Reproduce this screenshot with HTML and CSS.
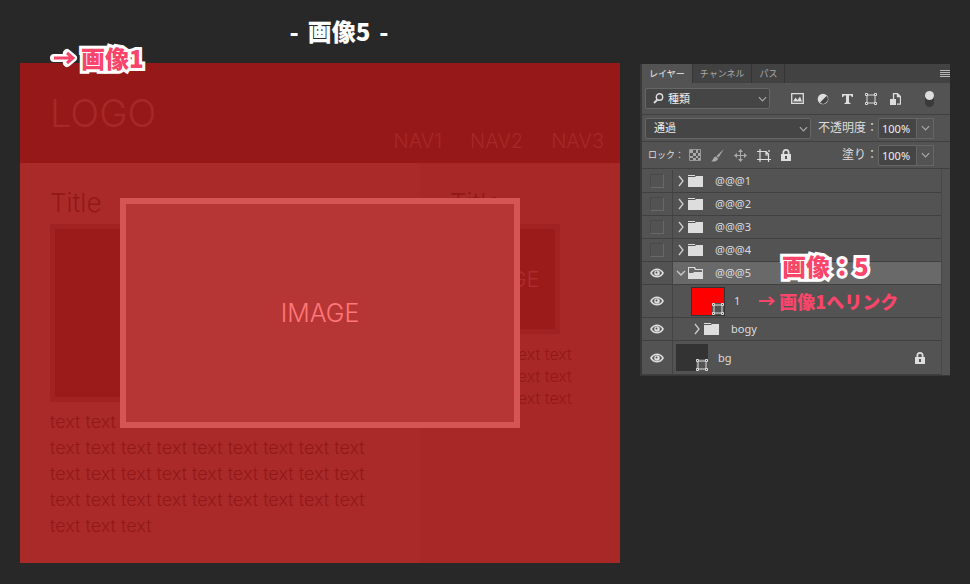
FILE: index.html
```html
<!DOCTYPE html>
<html lang="ja">
<head>
<meta charset="utf-8">
<title>画像5</title>
<link rel="stylesheet" href="styles.css">
</head>
<body>
<svg class="defs" width="0" height="0" aria-hidden="true">
  <symbol id="folder" viewBox="0 0 15 12"><path d="M0 0h7v1H0zM0 2h7l1-1h7v11H0z"/></symbol>
  <symbol id="folder-open" viewBox="0 0 15 12"><path fill-rule="evenodd" d="M0 0h7l1 2h7v10H0zM1 1v5h4l1-1h8V3H7L6 1z"/></symbol>
  <symbol id="eye" viewBox="0 0 14 10"><path fill-rule="evenodd" d="M0 5C3-1 11-1 14 5 11 11 3 11 0 5zM2 5c2 4 8 4 10 0C10 1 4 1 2 5z"/><circle cx="7" cy="5" r="2.8"/><circle cx="6.5" cy="4.5" r="1" fill="#535353"/></symbol>
  <symbol id="right" viewBox="0 0 6 12"><path d="M1 1l4 5-4 5" fill="none" stroke="currentColor" stroke-width="1.3"/></symbol>
  <symbol id="down" viewBox="0 0 10 6"><path d="M1 1l4 4 4-4" fill="none" stroke="currentColor" stroke-width="1.3"/></symbol>
  <symbol id="lock" viewBox="0 0 10 12"><path fill-rule="evenodd" d="M0 5h1.5V3.5a3.5 3.5 0 0 1 7 0V5H10v7H0zM3.2 5h3.6V3.5a1.8 1.8 0 0 0-3.6 0zM4 7v3h2V7z"/></symbol>
  <symbol id="shape" viewBox="0 0 12 12"><path d="M2 2h8M2 10h8M2 2v8M10 2v8" fill="none" stroke="currentColor"/><g fill="#444" stroke="currentColor"><path d="M.5.5h2v2h-2zM9.500.5h2v2h-2zM.5 9.500h2v2h-2zM9.500 9.500h2v2h-2z"/></g></symbol>
</svg>
<main class="page">
  <section class="preview">
    <h1 class="heading"><span>-</span><span>画像5</span><span>-</span></h1>
    <div class="mock">
      <a class="callout callout-link" href="#image1"><svg class="callout-arrow" viewBox="0 0 26 18" aria-hidden="true"><path class="outline" d="M3 9h18M16 4l6 5-6 5"/><path class="ink" d="M3 9h18M16 4l6 5-6 5"/></svg><span>画像1</span></a>
      <header class="mock-header">
        <div class="logo">LOGO</div>
        <nav class="nav"><a href="#nav1">NAV1</a><a href="#nav2">NAV2</a><a href="#nav3">NAV3</a></nav>
      </header>
      <div class="mock-body">
        <article class="content">
          <h2 class="title">Title</h2>
          <div class="picture"></div>
          <p>text text text text text text text text text<br>text text text text text text text text text<br>text text text text text text text text text<br>text text text text text text text text text<br>text text text</p>
        </article>
        <aside class="side">
          <h2 class="title">Title</h2>
          <div class="picture">IMAGE</div>
          <p>text text text text<br>text text text text<br>text text text text</p>
        </aside>
      </div>
      <div class="modal">IMAGE</div>
    </div>
  </section>
  <section class="panel">
    <div class="tabs">
      <button class="tab active">レイヤー</button><button class="tab">チャンネル</button><button class="tab">パス</button>
      <button class="menu" aria-label="メニュー"><svg width="10" height="8" viewBox="0 0 10 8"><path d="M0 .5h10M0 2.500h10M0 4.500h10M0 6.500h10" stroke="#bbb"/></svg></button>
    </div>
    <div class="bar filter">
      <div class="select kind">
        <svg class="search" width="11" height="11" viewBox="0 0 11 11"><circle cx="6.500" cy="4" r="3.200" fill="none" stroke="#ddd" stroke-width="1.400"/><path d="M4.500 6.500L1 10" stroke="#ddd" stroke-width="1.800"/></svg>
        <select aria-label="種類"><option>種類</option></select>
        <svg class="chev" width="9" height="6"><use href="#down"/></svg>
      </div>
      <div class="filters">
        <button aria-label="ピクセル"><svg width="13" height="11" viewBox="0 0 13 11"><path d="M.7.7h11.600v9.600H.7z" fill="none" stroke="#ddd" stroke-width="1.300"/><path d="M2 8.500l2.500-4 2 2.500L9 3.500l2 5z"/></svg></button>
        <button aria-label="調整"><svg width="12" height="12" viewBox="0 0 12 12"><circle cx="6" cy="6" r="5.300"/><path d="M3 9.500L9.500 3a4.600 4.600 0 0 1-6.500 6.500z" fill="#444"/></svg></button>
        <button aria-label="テキスト"><svg width="11" height="10" viewBox="0 0 11 10"><path d="M0 0h11v3H9.800L9 1.500H7v7l1.500.500v1h-6V9L4 8.500v-7H2L1.200 3H0z"/></svg></button>
        <button aria-label="シェイプ"><svg width="12" height="12"><use href="#shape"/></svg></button>
        <button aria-label="スマート"><svg width="11" height="12" viewBox="0 0 11 12"><path d="M3.500 6V.7h4l3 3v7.500H7M7.500.7v3h3" fill="none" stroke="#ddd" stroke-width="1.300"/><path d="M0 6h6v6H0z"/></svg></button>
      </div>
      <button class="toggle" aria-label="フィルター"></button>
    </div>
    <div class="bar">
      <div class="select blend">
        <select aria-label="描画モード"><option>通過</option></select>
        <svg class="chev" width="9" height="6"><use href="#down"/></svg>
      </div>
      <label for="opacity">不透明度：</label>
      <div class="number"><input id="opacity" value="100%"><button aria-label="不透明度を選択"><svg width="9" height="6"><use href="#down"/></svg></button></div>
    </div>
    <div class="bar locks">
      <span class="lock-label">ロック：</span>
      <div class="lock-tools">
        <button aria-label="透明"><svg width="12" height="12" viewBox="0 0 12 12"><path d="M.5.5h11v11H.5z" fill="none" stroke="#999"/><path fill="#aaa" d="M1 1h3v3H1zM7 1h2v3H7zM4 4h3v3H4zM9 4h2v3H9zM1 7h3v2H1zM7 7h2v2H7zM4 9h3v2H4zM9 9h2v2H9z"/></svg></button>
        <button aria-label="ブラシ"><svg width="13" height="13" viewBox="0 0 13 13"><path fill="#aaa" d="M13 0L7.500 8.500 5.500 7zM5 7.500l2 1.700C7 12 4 13 0 12.500 2.500 11 2 8 5 7.500z"/></svg></button>
        <button aria-label="位置"><svg width="13" height="13" viewBox="0 0 13 13"><path fill="#aaa" d="M6 2h1v4h4v1H7v4H6V7H2V6h4zM6.500 0L9 3H4zM6.500 13L4 10h5zM0 6.500L3 4v5zM13 6.500L10 9V4z"/></svg></button>
        <button aria-label="アートボード"><svg width="14" height="13" viewBox="0 0 14 13"><path d="M3 0v13M0 2.500h9l3 3M11.500 5v8M0 10.500h14M9 2v4h3M12 1v2" fill="none" stroke="#ddd" stroke-width="1.200"/></svg></button>
        <button aria-label="すべて"><svg width="10" height="12"><use href="#lock"/></svg></button>
      </div>
      <label for="fill">塗り：</label>
      <div class="number"><input id="fill" value="100%"><button aria-label="塗りを選択"><svg width="9" height="6"><use href="#down"/></svg></button></div>
    </div>
    <ul class="layers">
      <li class="layer"><button class="eye off" aria-label="表示"></button><svg class="caret" width="6" height="12"><use href="#right"/></svg><svg class="folder" width="15" height="12"><use href="#folder"/></svg><span>@@@1</span></li>
      <li class="layer"><button class="eye off" aria-label="表示"></button><svg class="caret" width="6" height="12"><use href="#right"/></svg><svg class="folder" width="15" height="12"><use href="#folder"/></svg><span>@@@2</span></li>
      <li class="layer"><button class="eye off" aria-label="表示"></button><svg class="caret" width="6" height="12"><use href="#right"/></svg><svg class="folder" width="15" height="12"><use href="#folder"/></svg><span>@@@3</span></li>
      <li class="layer"><button class="eye off" aria-label="表示"></button><svg class="caret" width="6" height="12"><use href="#right"/></svg><svg class="folder" width="15" height="12"><use href="#folder"/></svg><span>@@@4</span></li>
      <li class="layer selected"><button class="eye" aria-label="非表示"><svg width="14" height="10"><use href="#eye"/></svg></button><svg class="caret" width="10" height="6"><use href="#down"/></svg><svg class="folder" width="15" height="12"><use href="#folder-open"/></svg><span>@@@5</span><strong class="callout callout-layer">画像：5</strong></li>
      <li class="layer tall child"><button class="eye" aria-label="非表示"><svg width="14" height="10"><use href="#eye"/></svg></button><div class="thumb red"><svg width="12" height="12"><use href="#shape"/></svg></div><span>1</span><a class="link" href="#image1"><svg class="link-arrow" viewBox="0 0 26 18" aria-hidden="true"><path class="ink" d="M1 9h22M16 3l7 6-7 6"/></svg>画像1へリンク</a></li>
      <li class="layer nested"><button class="eye" aria-label="非表示"><svg width="14" height="10"><use href="#eye"/></svg></button><svg class="caret" width="6" height="12"><use href="#right"/></svg><svg class="folder" width="15" height="12"><use href="#folder"/></svg><span>bogy</span></li>
      <li class="layer tall"><button class="eye" aria-label="非表示"><svg width="14" height="10"><use href="#eye"/></svg></button><div class="thumb"><svg width="12" height="12"><use href="#shape"/></svg></div><span>bg</span><svg class="locked" width="10" height="12"><use href="#lock"/></svg></li>
    </ul>
  </section>
</main>
</body>
</html>
```
FILE: styles.css
```css
* { box-sizing: border-box; }
body { margin: 0; min-height: 100vh; background: #282828; color: #ddd; font-family: "Noto Sans", "Noto Sans CJK JP", sans-serif; }
button { padding: 0; border: 0; background: none; color: inherit; font: inherit; display: flex; align-items: center; justify-content: center; }
a { color: inherit; text-decoration: none; }
svg { display: block; flex: none; fill: currentColor; }
.defs { position: absolute; }
.page { display: grid; grid-template-columns: 600fr 310fr; gap: 20px; padding: 0 20px 20px; align-items: start; }

.heading { display: flex; justify-content: center; gap: 9px; height: 63px; margin: 0; padding: 15px 0 0 38px; color: #fff; font: 900 24px/32px "Noto Sans CJK JP", sans-serif; }
.mock { position: relative; min-height: 500px; display: flex; flex-direction: column; background: #aa2a2a; font-family: Inter, sans-serif; font-weight: 300; }
.mock-header { height: 100px; display: flex; justify-content: space-between; padding: 0 16px 0 30px; background: #971818; color: #a62828; }
.logo { padding-top: 22px; font-size: 38px; line-height: 56px; }
.nav { display: flex; align-items: flex-end; gap: 28px; padding-bottom: 10px; font-size: 20px; line-height: 24px; }
.mock-body { flex: 1; display: grid; grid-template-columns: minmax(0, 400fr) minmax(0, 200fr); color: #921818; }
.content, .side { padding: 24px 30px 0; }
.side { background: #a82828; padding-right: 60px; }
.title { margin: 0; font-size: 26px; line-height: 32px; font-weight: 300; }
.picture { display: flex; align-items: center; justify-content: center; border: 5px solid #a12222; background: #9b1b1b; color: #ad2d2d; font-size: 22px; }
.content .picture { height: 178px; margin-top: 5px; }
.side .picture { height: 110px; margin-top: 5px; }
.content p { margin: 7px 0 0; font-size: 18px; line-height: 26px; white-space: nowrap; }
.side p { margin: 9px 0 0; font-size: 16px; line-height: 22px; white-space: nowrap; }
.modal { position: absolute; inset: 135px 100px; display: flex; align-items: center; justify-content: center; border: 6px solid #d55555; background: #b63636; color: #f77; font-size: 25px; }

.callout { position: absolute; display: flex; align-items: center; color: #fa456b; font: 900 24px/32px "Noto Sans CJK JP", sans-serif; white-space: nowrap; paint-order: stroke fill; -webkit-text-stroke: 6px #fff; }
.callout-link { left: 31px; top: -21px; gap: 4px; }
.callout-arrow { width: 26px; height: 18px; overflow: visible; }
.callout-arrow path, .link-arrow path { fill: none; }
.callout-arrow .outline { stroke: #fff; stroke-width: 8px; stroke-linecap: round; stroke-linejoin: round; }
.ink { stroke: #fa456b; stroke-width: 3px; }
.callout-layer { left: 140px; top: -12px; }

.panel { margin-top: 64px; border: 1px solid #383838; border-width: 0 0 1px 2px; background: #535353; font-size: 11px; line-height: 16px; }
.tabs { display: flex; height: 19px; background: #424242; }
.tab { padding: 0 7px; border-right: 1px solid #353535; color: #aaa; font-size: 9px; }
.tab.active { background: #535353; color: #eee; }
.menu { margin-left: auto; width: 11px; }
.bar { display: flex; align-items: center; height: 27px; padding: 0 16px 0 3px; border-bottom: 1px solid #404040; }
.bar.filter { height: 32px; }
.bar label { margin-left: auto; font-size: 12px; white-space: nowrap; }
.select { position: relative; height: 21px; }
.kind { width: 125px; }
.blend { width: 166px; }
select, input { width: 100%; height: 100%; border: 1px solid #666; border-radius: 2px; background: #454545; color: #eee; font: inherit; outline: 0; }
select { appearance: none; padding: 0 20px 0 8px; }
.kind select { padding-left: 22px; }
.chev { position: absolute; right: 3px; top: 8px; color: #aaa; }
.search { position: absolute; left: 8px; top: 5px; }
.filters { flex: 1; display: flex; justify-content: space-between; padding: 0 24px 0 21px; }
.toggle { width: 9px; height: 16px; border-radius: 5px; background: #3a3a3a; align-items: flex-start; }
.toggle::before { content: ""; width: 9px; height: 9px; border-radius: 50%; background: #ddd; }
.number { display: flex; width: 56px; height: 21px; }
.number input { flex: 1; min-width: 0; padding: 0 2px 0 3px; border-radius: 2px 0 0 2px; }
.number button { width: 17px; border: 1px solid #666; border-left: 0; color: #aaa; }
.lock-label { width: 44px; padding-left: 3px; font-size: 9px; white-space: nowrap; }
.lock-tools { display: flex; gap: 10px; }

.layers { list-style: none; margin: 0 8px 0 0; padding: 1px 0 0; border-right: 1px solid #484848; }
.layer { position: relative; display: flex; align-items: center; height: 23px; border-bottom: 1px solid #404040; }
.layer.selected { background: #696969; }
.layer.tall { height: 34px; }
.layer.child { height: 33px; }
.eye { width: 31px; align-self: stretch; margin-right: 3px; border-right: 1px solid #444; background: #535353; }
.eye.off::before { content: ""; width: 12px; height: 12px; border: 1px solid #494949; border-right-color: #686868; border-bottom-color: #686868; }
.caret { width: 10px; margin-right: 4px; color: #ccc; }
.layer .folder { margin-right: 12px; margin-left: -2px; }
.thumb { display: flex; align-items: flex-end; justify-content: flex-end; width: 32px; height: 27px; margin-right: 10px; background: #333; }
.thumb.red { background: #f00; }
.thumb svg { background: #535353; }
.child .thumb { margin-left: 16px; outline: 1px solid #333; }
.nested .eye { margin-right: 19px; }
.link { display: flex; align-items: center; gap: 3px; margin-left: 18px; color: #fa456b; font: 900 18px/24px "Noto Sans CJK JP", sans-serif; white-space: nowrap; }
.link-arrow { width: 18px; height: 12px; }
.locked { margin: 0 16px 0 auto; }
```
